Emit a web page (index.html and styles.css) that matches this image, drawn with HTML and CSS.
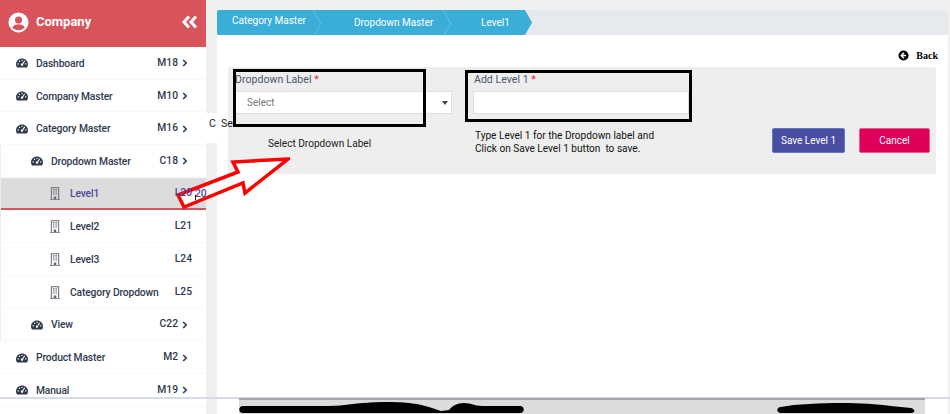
FILE: index.html
```html
<!DOCTYPE html>
<html lang="en">
<head>
<meta charset="utf-8">
<title>Level1</title>
<link rel="stylesheet" href="styles.css">
</head>
<body>
<svg class="defs" width="0" height="0" aria-hidden="true">
  <symbol id="gauge" viewBox="0 0 16 12">
    <path fill-rule="evenodd" d="M8 0C3.600 0 0 3.400 0 7.600c0 1.600.5 3 1.300 4.400h13.400c.8-1.400 1.300-2.800 1.300-4.400C16 3.400 12.400 0 8 0zM2.200 6.400h1.600v1.500H2.200zM4 3h1.500v1.500H4zM7.300 1.800h1.500v1.500H7.300zM12.200 6.400h1.600v1.500h-1.600zM11 2.600l1.200.8-2.700 4.100c.3.7.1 1.500-.5 2-.8.5-1.800.4-2.300-.4-.5-.8-.3-1.800.4-2.300.4-.3 1-.3 1.400-.2z"/>
  </symbol>
  <symbol id="building" viewBox="0 0 12 15">
    <path fill-rule="evenodd" d="M1 0h10v14h1v1H0v-1h1zM2.200 1.200V14h2.300v-2.800h3V14h2.300V1.200zM3.500 2.500h1.300v1.300H3.500zM5.400 2.500h1.300v1.300H5.400zM7.200 2.500h1.300v1.300H7.200zM3.500 5h1.300v1.300H3.500zM5.400 5h1.300v1.300H5.400zM7.200 5h1.300v1.300H7.200zM3.500 7.500h1.300v1.300H3.500zM5.400 7.500h1.300v1.300H5.400zM7.200 7.500h1.300v1.300H7.200z"/>
  </symbol>
  <symbol id="chev" viewBox="0 0 6 8">
    <path d="M1.200 1l3 3-3 3" fill="none" stroke="currentColor" stroke-width="1.600"/>
  </symbol>
</svg>

<div class="page">
  <aside class="sidebar">
    <header class="brand">
      <svg class="avatar" viewBox="0 0 22 22" aria-hidden="true">
        <circle cx="11" cy="11" r="10.500" fill="#fff"/>
        <circle cx="11" cy="8.500" r="3.700" fill="#d9535a"/>
        <path d="M4.500 16.500c1-2.800 3.500-3.700 6.500-3.700s5.500.9 6.500 3.700C15.800 18.300 13.500 19 11 19s-4.800-.7-6.500-2.500z" fill="#d9535a"/>
      </svg>
      <span class="brand-name">Company</span>
      <svg class="collapse" viewBox="0 0 16 14" aria-hidden="true">
        <path d="M7 1.500L2 7l5 5.500M14 1.500L9 7l5 5.500" fill="none" stroke="#fff" stroke-width="3"/>
      </svg>
    </header>
    <nav class="menu">
      <a class="row"><svg class="ico-gauge"><use href="#gauge"/></svg><span class="name">Dashboard</span><span class="code">M18</span><svg class="chev"><use href="#chev"/></svg></a>
      <a class="row"><svg class="ico-gauge"><use href="#gauge"/></svg><span class="name">Company Master</span><span class="code">M10</span><svg class="chev"><use href="#chev"/></svg></a>
      <a class="row"><svg class="ico-gauge"><use href="#gauge"/></svg><span class="name">Category Master</span><span class="code">M16</span><svg class="chev"><use href="#chev"/></svg></a>
      <div class="sub">
        <a class="row lvl2"><svg class="ico-gauge"><use href="#gauge"/></svg><span class="name">Dropdown Master</span><span class="code">C18</span><svg class="chev"><use href="#chev"/></svg></a>
        <a class="row lvl3 active"><svg class="ico-building"><use href="#building"/></svg><span class="name">Level1</span><span class="code">L20</span><span class="extra">20</span></a>
        <a class="row lvl3"><svg class="ico-building"><use href="#building"/></svg><span class="name">Level2</span><span class="code">L21</span></a>
        <a class="row lvl3"><svg class="ico-building"><use href="#building"/></svg><span class="name">Level3</span><span class="code">L24</span></a>
        <a class="row lvl3"><svg class="ico-building"><use href="#building"/></svg><span class="name">Category Dropdown</span><span class="code">L25</span></a>
        <a class="row lvl2"><svg class="ico-gauge"><use href="#gauge"/></svg><span class="name">View</span><span class="code">C22</span><svg class="chev"><use href="#chev"/></svg></a>
      </div>
      <a class="row"><svg class="ico-gauge"><use href="#gauge"/></svg><span class="name">Product Master</span><span class="code">M2</span><svg class="chev"><use href="#chev"/></svg></a>
      <a class="row"><svg class="ico-gauge"><use href="#gauge"/></svg><span class="name">Manual</span><span class="code">M19</span><svg class="chev"><use href="#chev"/></svg></a>
      <a class="row"><svg class="ico-gauge"><use href="#gauge"/></svg><span class="name">Reports</span><span class="code">M3</span><svg class="chev"><use href="#chev"/></svg></a>
    </nav>
  </aside>

  <main class="main">
    <div class="crumbs">
      <ol class="crumb-list">
        <li class="crumb first">Category Master</li>
        <li class="crumb second">Dropdown Master</li>
        <li class="crumb third">Level1</li>
      </ol>
    </div>
    <div class="content">
      <div class="back-row">
        <a class="back">
          <svg class="back-ico" viewBox="0 0 12 12" aria-hidden="true">
            <circle cx="6" cy="6" r="5.500" fill="#000"/>
            <path d="M6.500 3L3.500 6l3 3M3.800 6h5" fill="none" stroke="#fff" stroke-width="1.500"/>
          </svg>
          <span>Back</span>
        </a>
      </div>
      <section class="panel">
        <div class="col col-select">
          <label class="label">Dropdown Label <b class="req">*</b></label>
          <div class="select"><span>Select</span><i class="caret"></i></div>
          <p class="hint-center">Select Dropdown Label</p>
        </div>
        <div class="col col-input">
          <label class="label">Add Level 1 <b class="req">*</b></label>
          <div class="input"></div>
          <p class="hint">Type Level 1 for the Dropdown label and<br>Click on Save Level 1 button&nbsp; to save.</p>
        </div>
        <div class="actions">
          <button class="btn save" type="button">Save Level 1</button>
          <button class="btn cancel" type="button">Cancel</button>
        </div>
      </section>
    </div>
  </main>
</div>

<div class="tip"><span>C</span><span class="tip-se">Se</span></div>
<div class="mark mark-a"></div>
<div class="mark mark-b"></div>
<svg class="arrow" viewBox="0 0 120 90" aria-hidden="true">
  <polygon points="118,29 63,32 68,42 8,65 14,77 73,53 75,63" fill="#fff" stroke="#f00" stroke-width="3.500"/>
</svg>
<div class="ibeam"></div>
<div class="rule"></div>
<footer class="footer">
  <svg class="scrawl" viewBox="0 0 686 14" preserveAspectRatio="none" aria-hidden="true">
    <path d="M4 5H90c15 0 30-4 55-4 25 0 35 2 45 5l12 4 8-1c3-4 8-7 15-7 8 0 10 3 18 3h38c5 0 5 7 0 7H4c-5 0-5-7 0-7zM542 6c15-3 40-4 60-4s35 1 50 3l20 2c4 1 5 5 0 5H542c-5 0-5-6 0-6z" fill="#000"/>
  </svg>
</footer>
</body>
</html>
```

FILE: styles.css
```css
* { box-sizing: border-box; }
html, body { margin: 0; height: 414px; overflow: hidden; }
body { position: relative; background: #f0f0f0; font-family: Roboto, "Liberation Sans", sans-serif; color: #2f3b4d; }
.defs { position: absolute; }
.page { display: flex; height: 414px; overflow: hidden; }

.sidebar { flex: 0 0 206px; background: #fff; }
.brand { height: 47px; background: #d9535a; display: flex; align-items: center; padding: 0 8px; color: #fff; }
.avatar { width: 21px; height: 21px; flex: none; margin-right: 7px; position: relative; top: -1px; }
.brand-name { font-size: 13px; font-weight: 700; flex: 1; position: relative; top: -2px; }
.collapse { width: 16px; height: 14px; position: relative; top: -2px; }

.row { display: flex; align-items: center; height: 32.700px; padding-left: 16px; padding-top: 1px; border-bottom: 1px solid #f8f8f8; font-size: 10.300px; font-weight: 500; position: relative; letter-spacing: -.15px; }
.ico-gauge { width: 12px; height: 10px; flex: none; margin-right: 8px; fill: #2f3b4d; }
.name { flex: 1; white-space: nowrap; }
.code { font-size: 10.300px; letter-spacing: 0; position: relative; top: -1px; z-index: 2; }
.chev { width: 6px; height: 8px; margin-left: 4px; margin-right: 18px; color: #2f3b4d; flex: none; }

.sub { border-left: 1px solid #e9eff3; }
.lvl2 { padding-left: 30px; }
.lvl3 { padding-left: 49px; padding-right: 14px; }
.ico-building { width: 10px; height: 13px; flex: none; margin-right: 10px; fill: #6b6570; }
.active { background: #dcdcdc; border-bottom: 2px solid #d9535a; color: #4c479c; }
.extra { position: absolute; left: 194px; top: 9px; font-size: 10.300px; letter-spacing: 0; z-index: 2; }

.main { flex: 1; margin: 10px 2px 0 11px; background: #fff; }
.crumbs { height: 25px; background: #e6e9ee; }
.crumb-list { list-style: none; display: flex; margin: 0; padding: 0; width: 315px; height: 25px; background: #3badd9; color: #fff; font-size: 10px; clip-path: polygon(0 0, 308px 0, 315px 12.500px, 308px 25px, 0 25px); border-radius: 2px 0 0 2px; }
.crumb { position: relative; height: 25px; line-height: 25px; white-space: nowrap; }
.crumb::after { content: ""; position: absolute; top: 3.500px; width: 18px; height: 18px; border-top: 1px solid #63bfe3; border-right: 1px solid #63bfe3; transform: rotate(45deg) skew(15deg, 15deg); }
.first { width: 110px; padding-left: 15px; line-height: 22px; }
.first::after { right: 6px; }
.second { width: 127px; padding-left: 27px; }
.second::after { right: 3px; }
.third { padding-left: 27px; }
.third::after { display: none; }

.content { padding: 0 12px 0 11px; }
.back-row { display: flex; justify-content: flex-end; height: 32px; padding-top: 14px; margin-right: -2px; }
.back { display: flex; align-items: center; gap: 7px; height: 12px; font: 700 10px "Liberation Serif", serif; color: #000; }
.back-ico { width: 11px; height: 11px; }

.panel { display: flex; height: 107px; background: #eeeeee; border-radius: 2px; position: relative; padding-left: 7px; }
.col { display: flex; flex-direction: column; }
.col-select { width: 217px; }
.col-input { width: 216px; margin-left: 21px; }
.label { height: 24px; padding-top: 6px; font-size: 10.500px; line-height: 14px; color: #4a5568; letter-spacing: .05px; white-space: nowrap; }
.col-input .label { padding-left: 1px; }
.req { color: #e8202a; font-weight: 400; }
.select, .input { height: 23px; background: #fff; border: 1px solid #dedede; }
.select { display: flex; align-items: center; justify-content: space-between; padding: 0 3px 0 11px; font-size: 10px; color: #777; }
.caret { width: 0; height: 0; border: 3px solid transparent; border-top: 4px solid #444; border-bottom: 0; }
.hint-center { margin: 23px 0 0; padding-left: 33px; font-size: 10.100px; line-height: 13px; color: #222; white-space: nowrap; }
.hint { margin: 15px 0 0 2px; font-size: 10.100px; line-height: 13px; color: #111; white-space: nowrap; }
.actions { position: absolute; right: 6px; top: 61px; display: flex; gap: 14px; }
.btn { height: 25px; border: 1px solid transparent; border-radius: 2px; color: #fff; font: 400 10px Roboto, sans-serif; padding: 0; }
.save { width: 73px; background: #4a4ea3; border-color: #5b7cc0; }
.cancel { width: 71px; background: #e0005a; border-color: #ea5a8a; }

.tip { position: absolute; left: 206px; top: 113px; width: 11px; height: 30px; background: #fff; font-size: 10.500px; color: #222; line-height: 22px; padding-left: 3px; }
.tip-se { position: absolute; left: 15px; top: 0; }
.mark { position: absolute; border: 3px solid #000; }
.mark-a { left: 233px; top: 69px; width: 193px; height: 58px; }
.mark-b { left: 465px; top: 70px; width: 227px; height: 52px; }
.arrow { position: absolute; left: 170px; top: 130px; width: 120px; height: 90px; z-index: 1; }
.ibeam { position: absolute; left: 195px; top: 195px; width: 1px; height: 5px; background: #222; z-index: 3; }
.rule { position: absolute; left: 0; right: 0; top: 397px; height: 2px; background: #d5dce4; z-index: 3; }
.footer { position: absolute; left: 239px; top: 398px; width: 686px; height: 16px; background: #dcdcdc; border-top: 2px solid #a2a6ab; z-index: 4; }
.scrawl { display: block; width: 686px; height: 14px; position: relative; top: 1px; }
```
